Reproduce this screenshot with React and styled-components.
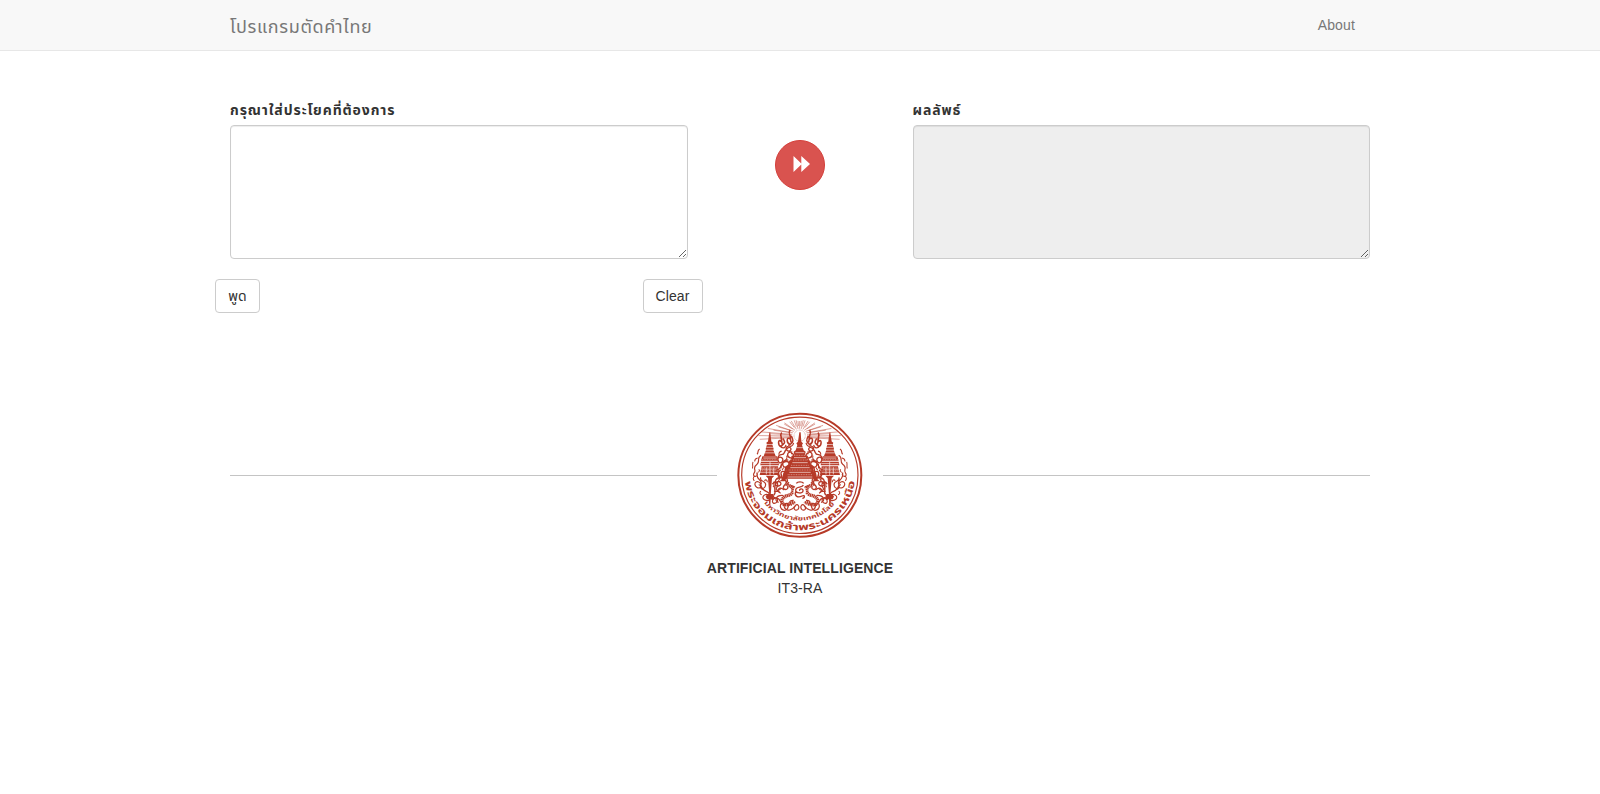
import React from 'react';
import styled, { createGlobalStyle } from 'styled-components';

const GlobalStyle = createGlobalStyle`
  *, *::before, *::after { box-sizing: border-box; }
  body {
    margin: 0;
    background: #fff;
    color: #333;
    font: 14px/20px "Liberation Sans", "Noto Sans Thai", "Noto Sans", sans-serif;
  }
`;

const Navbar = styled.nav`
  height: 51px;
  background: #f8f8f8;
  border-bottom: 1px solid #e7e7e7;
`;

const Container = styled.div`
  width: 1170px;
  margin: 0 auto;
  padding: 0 15px;
`;

const NavInner = styled(Container)`
  display: flex;
  justify-content: space-between;
`;

const Brand = styled.a`
  padding: 17px 0 13px;
  font-size: 18px;
  line-height: 20px;
  letter-spacing: 0.65px;
  color: #777;
  white-space: nowrap;
`;

const NavLink = styled.a`
  padding: 15px;
  letter-spacing: 0.15px;
  color: #777;
`;

const Row = styled.main`
  display: flex;
  margin: 49px -15px 0;
`;

const Column = styled.section`
  width: 487.5px;
  padding: 0 15px;
`;

const Middle = styled.div`
  flex: 1;
  display: flex;
  justify-content: center;
  padding-top: 40px;
`;

const Label = styled.label`
  display: block;
  width: max-content;
  height: 20px;
  margin-bottom: 5px;
  font-weight: 700;
  letter-spacing: 0.9px;
  white-space: nowrap;
`;

const TextArea = styled.textarea`
  display: block;
  width: 100%;
  height: 134px;
  padding: 6px 12px;
  font: inherit;
  color: #555;
  background: ${(p) => (p.readOnly ? '#eee' : '#fff')};
  border: 1px solid #ccc;
  border-radius: 4px;
  box-shadow: inset 0 1px 1px rgba(0, 0, 0, 0.075);
  outline: none;
`;

const Actions = styled.div`
  display: flex;
  justify-content: space-between;
  margin: 20px -15px 0;
`;

const Button = styled.button`
  width: ${(p) => p.$width}px;
  height: 34px;
  padding: 6px 0;
  font: inherit;
  letter-spacing: 0.15px;
  color: #333;
  background: #fff;
  border: 1px solid #ccc;
  border-radius: 4px;
`;

const RoundButton = styled.button`
  display: flex;
  align-items: center;
  justify-content: center;
  width: 50px;
  height: 50px;
  padding: 0 0 2px 3px;
  background: #d9534f;
  border: 1px solid #d43f3a;
  border-radius: 50%;
`;

const Footer = styled.footer`
  margin-top: 99px;
  text-align: center;
`;

const Divider = styled.div`
  display: flex;
  align-items: center;
  gap: 20px;
  margin-bottom: 20px;
`;

const Line = styled.div`
  flex: 1;
  height: 1px;
  background: #c4c4c4;
`;

const Seal = styled.svg`
  display: block;
  width: 126px;
  height: 126px;
`;

const SealText = styled.text`
  font-family: "Noto Sans Thai", "Liberation Sans", sans-serif;
  font-weight: 700;
  font-size: ${(p) => p.$size}px;
  fill: #b63a28;
`;

const Forward = () => (
  <svg width="17" height="16" viewBox="0 0 17 16" fill="#fff">
    <path d="M.5 0 8.3 7.5V0L17 8 8.3 16V8.5L.5 16Z" />
  </svg>
);

const rays = Array.from({ length: 33 }, (_, i) => {
  const a = ((-190 + i * 6.25) * Math.PI) / 180;
  const flat = Math.abs(Math.cos(a));
  const end = 46 + flat * flat * (i % 2 ? 44 : 78);
  const start = 23 + (i % 2) * 8;
  return `M${209 + Math.cos(a) * start} ${94 + Math.sin(a) * start}L${209 + Math.cos(a) * end} ${94 + Math.sin(a) * Math.min(end, 51)}`;
}).join('');

const SidePart = () => (
  <g>
    <path fill="#b63a28" stroke="none" d="M114 80h3l3 26 5 4-2 5 4 13-1 3 7 17h-36l7-17-1-3 4-13-2-5 5-4ZM93 149h44l4 13H89ZM89 165h52l2 10H87ZM91 178h49l5 25H85ZM103 205h26l-7 7-4 49h-4l-4-49ZM108 258h17l4 7-5 8h-6l-1 18h-3l-2-18h-5l-4-8Z" />
    <path stroke="#fff" strokeWidth="1.8" d="M107 115h18M105 123h22M102 131h27M100 139h31M96 154h40M89 170h52M88 186h56M86 195h58M105 181v20M116 165v38M127 181v20" />
    <path stroke="#fff" strokeWidth="1" strokeDasharray="3 2" d="M92 158h48M88 182h56M87 190h58" />
    <path d="M85 128c-9 6-2 10-8 15M89 146c-15 9-1 17-12 26-16 11-1 16-8 24-10 14 14 15 8 0-3 25 18 18 12 34-10-18-27-2-13 8 13 8 16-7 6-7M88 210c-4 15 15 7 15 21-2 16-20 11-15 0 8 29 28 12 27 32-14-12-29 6-14 12 16 6 20-9 10-15M123 229c13-15 19 0 14 9-8 12 6 11 13 3M121 274c11-15 25 2 13 9-14 7-14-13-1-13 18-3 11 21 27 17" />
    <path strokeWidth="3" d="M65 165c-3 8 1 12-2 19M71 206c-7 3-6 9-2 14M79 154c-7 1-9 6-9 10M82 187c5 2 1 8-3 8M96 242c-4 4-8 0-7-4M99 219c6-5 9 0 9 5M128 222c-2 7 2 11-3 16M137 226c10-11 10-18 7-23M128 249c7 4 13-1 17 3M91 260c-6-1-7-8-2-10" />
    <path strokeWidth="4.5" d="M151 80c-9 11 6 17-2 26-9-9-11 12 1 14 9-11 14-7 5-23M176 73c-9 13 7 16-1 25-9-6-11 12 1 17 12-8 10-14 4-25M149 94l4 22M176 87l3 22" />
    <path strokeWidth="3.5" d="M145 118c7 10 17 9 19-2M171 116c7 9 14 2 16-6" />
    <path strokeWidth="4" d="M178 125c-17-13-18 10-4 9 10-4 3-15-5-9-15 11-5 20-20 19-15 3-10 31 2 22 12-11-9-22-12-8M183 137c-18-4-17 14-7 16 14 5 14-15 3-12M171 160c-15-3-23 15-11 20 15 3 17-18 5-16-20 0-12 25-30 24M177 174c-20 2-20 30-4 29M148 188c-20 15 2 33 14 18 9-12-14-20-13-7 1 21 19 13 15 27M149 210c-22 0-23 29-6 24 14-5-1-19-8-9-13 18 4 28-8 36M165 212c12 12-9 17-9 27 1 10 19 5 12-3" />
    <path strokeWidth="3" d="M151 134c-7 1-9 7-8 11M166 147c4 8-2 12-4 15M185 154c-7 0-8 8-3 12M151 170c-5 5 2 9-3 14M167 188c-7 2-9 9-3 13M157 181l-5 8M139 216c2-6 7-8 11-7" />
    <path strokeWidth="10" strokeDasharray="4 1.2" d="M168 232c25 4 18 27 5 29-26 4-28 28-8 28 13-1 17-11 26-3" />
    <path strokeWidth="3.5" d="M177 234c19-1 19 15 10 23M159 246c-17-13-26 4-11 9M156 262c-24-2-28 17-14 20M149 285c-8 18 16 28 21 11 7-16-14-13-11-1 6 17 26 8 33-4 7-8 14 4 8 11-10 8-16-6-7-9M181 291c-9-10-7-16 6-15" />
  </g>
);

const UniversitySeal = () => (
  <Seal viewBox="21 21 378 378" role="img">
    <g fill="none" stroke="#b63a28">
      <circle cx="209.5" cy="211" r="184.5" strokeWidth="6" />
      <circle cx="209.5" cy="211" r="174.5" strokeWidth="3.5" />
      <path d={rays} strokeWidth="1.4" />
      <circle cx="209" cy="92" r="17" strokeWidth="1.5" strokeDasharray="2 2" />
      <g strokeWidth="3.5">
        <g transform="matrix(1 0 0 1.04 4 -1)"><SidePart /></g>
        <g transform="matrix(-1 0 0 1.04 415 -1)"><SidePart /></g>
      </g>
      <path fill="#b63a28" stroke="none" d="M208 82h4l2 28 5 5-3 5 5 16 6 4-2 9 9 4-2 10 10 5-2 12 12 5-3 12 9 6 4 19 7 7h-15l-4-8h-82l-4 8h-15l7-7 4-19 9-6-3-12 12-5-2-12 10-5-2-10 9-4-2-9 6-4 5-16-3-5 5-5Z" />
      <path stroke="#fff" strokeWidth="1.8" d="M199 128h22M196 143h27M192 158h36M187 173h46M181 188h58M178 202h64M173 216h74" />
      <path stroke="#fff" strokeWidth="1.2" strokeDasharray="3 2" d="M192 151h36M189 165h44M183 181h55M176 195h68M173 209h74" />
      <path strokeWidth="4" d="M177 232l-10 10M243 232l10 10M199 235c4-6 18-6 22 0" />
      <circle cx="209" cy="260" r="19" fill="#fff" stroke="none" />
      <path strokeWidth="4" d="M220 240c-3 10-22 2-23 15 0 11 22 12 22 2 0-8-12-6-10 0M197 260c-5 14 7 19 19 13 10-5 9 7 1 7" />
    </g>
    <defs>
      <path id="outerArc" d="M43.8 220A166 166 0 0 0 375.2 220" />
      <path id="innerArc" d="M97.6 287.2A135 135 0 0 0 321.4 287.2" />
    </defs>
    <SealText $size="29"><textPath href="#outerArc" startOffset="10" textLength="483" lengthAdjust="spacingAndGlyphs">พระจอมเกล้าพระนครเหนือ</textPath></SealText>
    <SealText $size="18"><textPath href="#innerArc" startOffset="8" textLength="243" lengthAdjust="spacingAndGlyphs">มหาวิทยาลัยเทคโนโลยี</textPath></SealText>
  </Seal>
);

const Credit = styled.div`
  font-weight: ${(p) => (p.$strong ? 700 : 400)};
  letter-spacing: 0.1px;
`;

export default function App() {
  return (
    <>
      <GlobalStyle />
      <Navbar>
        <NavInner>
          <Brand>โปรแกรมตัดคำไทย</Brand>
          <NavLink>About</NavLink>
        </NavInner>
      </Navbar>
      <Container>
        <Row>
          <Column>
            <Label>กรุณาใส่ประโยคที่ต้องการ</Label>
            <TextArea />
            <Actions>
              <Button $width={45}>พูด</Button>
              <Button $width={60}>Clear</Button>
            </Actions>
          </Column>
          <Middle>
            <RoundButton aria-label="ตัดคำ"><Forward /></RoundButton>
          </Middle>
          <Column>
            <Label>ผลลัพธ์</Label>
            <TextArea readOnly />
          </Column>
        </Row>
        <Footer>
          <Divider>
            <Line />
            <UniversitySeal />
            <Line />
          </Divider>
          <Credit $strong>ARTIFICIAL INTELLIGENCE</Credit>
          <Credit>IT3-RA</Credit>
        </Footer>
      </Container>
    </>
  );
}
